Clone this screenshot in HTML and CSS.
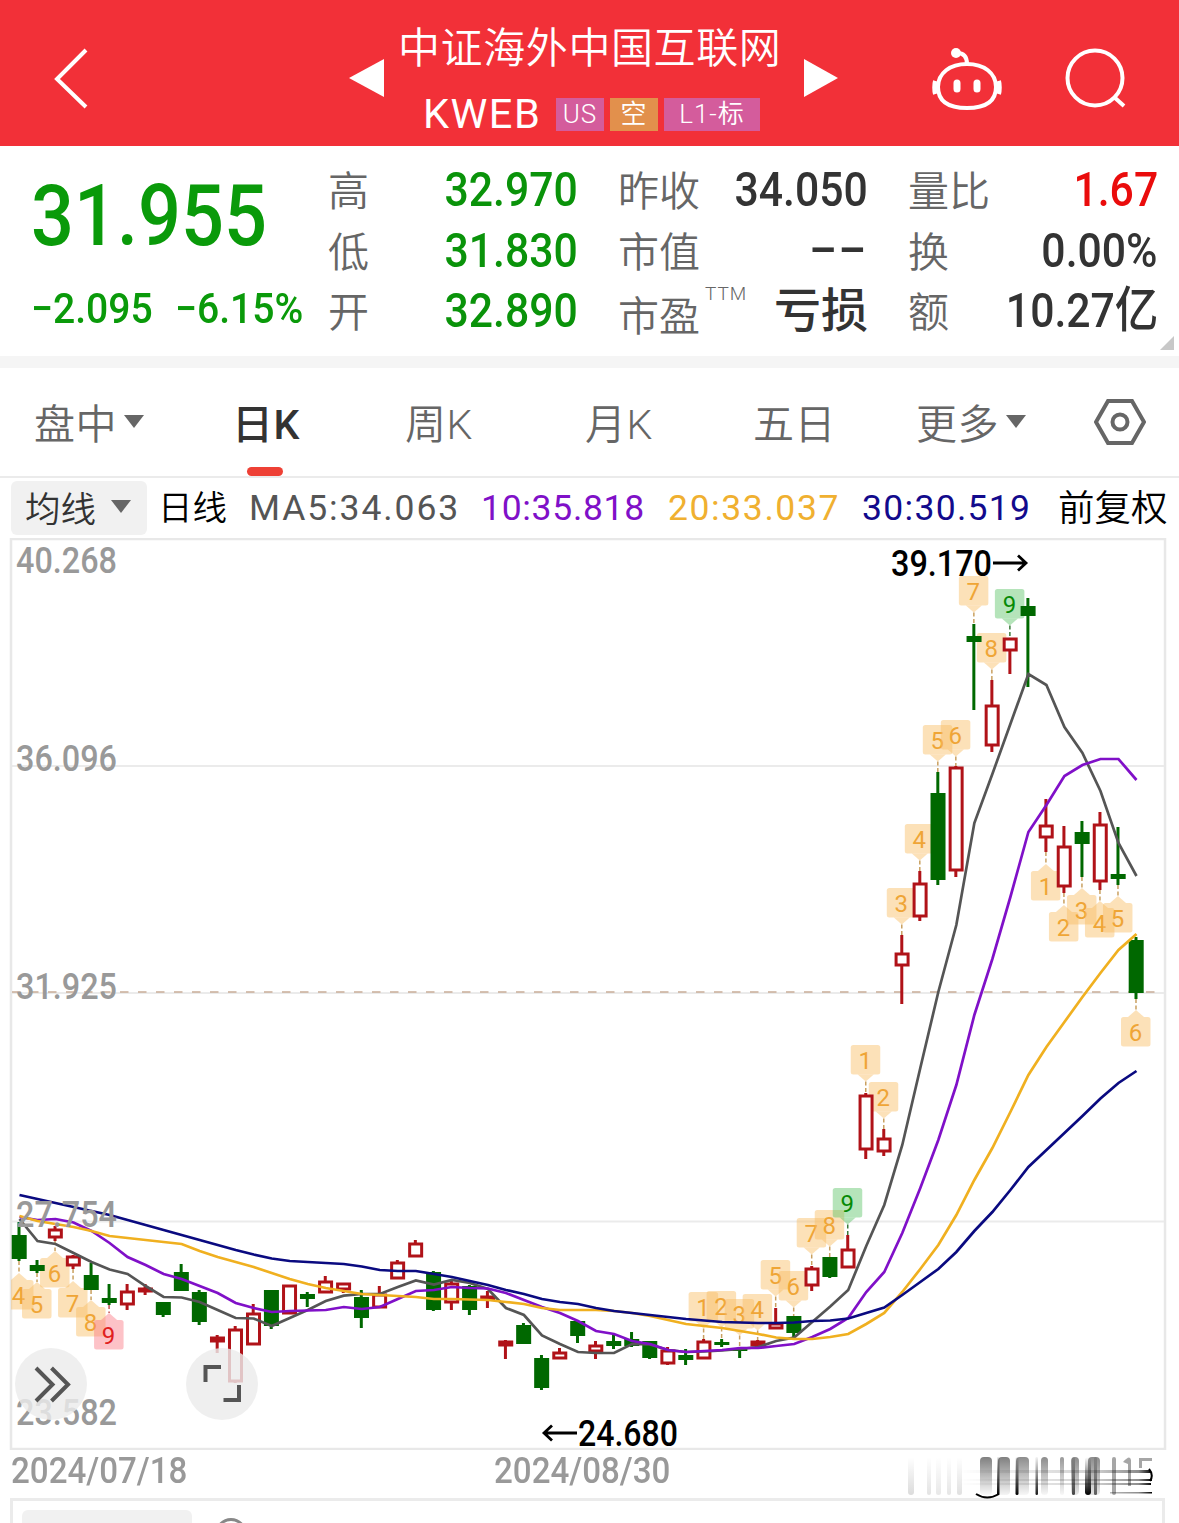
FILE: index.html
```
<!DOCTYPE html>
<html lang="zh-CN">
<head>
  <meta charset="UTF-8" />
  <meta name="viewport" content="width=device-width, initial-scale=1.0"/>
  <title>KWEB</title>
  <link rel="stylesheet" href="styles.css">
</head>
<body>

  <header class="header">
    <svg class="icon-back" width="40" height="66" viewBox="0 0 40 66"><path d="M34 5 L5 34 L34 62"/></svg>
    <svg class="arrow" width="35" height="38" viewBox="0 0 35 38"><path d="M0 19 L35 0 V38 Z"/></svg>
    <div class="title">
      <h1>中证海外中国互联网</h1>
      <div class="sub">
        <span class="code">KWEB</span>
        <span class="tag">US</span>
        <span class="tag tag-orange">空</span>
        <span class="tag tag-wide">L1-标</span>
      </div>
    </div>
    <svg class="arrow" width="35" height="38" viewBox="0 0 35 38"><path d="M34 19 L0 0 V38 Z"/></svg>
    <svg class="icon-robot" width="72" height="66" viewBox="0 0 72 66">
      <path d="M36 17 C53 17 65 26 65 40 C65 55 54 61 36 61 C18 61 7 55 7 40 C7 26 19 17 36 17 Z"/>
      <path class="ear" d="M4.500 34 C3.500 37 3.500 44 4.500 47 M67.500 34 C68.500 37 68.500 44 67.500 47"/>
      <path d="M26 6 C33 6 36 10 36 17"/>
      <circle class="dot" cx="25" cy="6" r="5"/>
      <path class="eye" d="M26 36 V42 M46 36 V42"/>
    </svg>
    <svg class="icon-search" width="66" height="66" viewBox="0 0 66 66"><circle cx="32" cy="32" r="27.500"/><path d="M51 51 L61 60"/></svg>
  </header>

  <section class="quote">
    <div class="price-box">
      <div class="price"><span>31.955</span></div>
      <div class="change"><span>−2.095</span><span>−6.15%</span></div>
    </div>
    <div class="stats">
      <div class="stat"><label>高</label><b class="green">32.970</b></div>
      <div class="stat"><label>低</label><b class="green">31.830</b></div>
      <div class="stat"><label>开</label><b class="green">32.890</b></div>
    </div>
    <div class="stats">
      <div class="stat"><label>昨收</label><b>34.050</b></div>
      <div class="stat"><label>市值</label><b class="dashes">––</b></div>
      <div class="stat"><label class="low">市盈<sup>TTM</sup></label><b class="cn">亏损</b></div>
    </div>
    <div class="stats">
      <div class="stat"><label>量比</label><b class="red">1.67</b></div>
      <div class="stat"><label>换</label><b>0.00%</b></div>
      <div class="stat"><label>额</label><b>10.27<i>亿</i></b></div>
    </div>
    <div class="corner"></div>
  </section>

  <nav class="tabs">
    <div class="tab tab-first">盘中<i class="caret"></i></div>
    <div class="tab active">日K</div>
    <div class="tab">周K</div>
    <div class="tab">月K</div>
    <div class="tab tab-five">五日</div>
    <div class="tab tab-more">更多<i class="caret"></i></div>
    <svg class="icon-set" width="52" height="48" viewBox="0 0 52 48"><path d="M14 3 H38 L50 24 L38 45 H14 L2 24 Z"/><circle cx="26" cy="24" r="7.500"/></svg>
  </nav>

  <div class="ma-row">
    <div class="ma-btn">均线<i class="caret"></i></div>
    <span class="period">日线</span>
    <span class="ma ma5">MA5:34.063</span>
    <span class="ma ma10">10:35.818</span>
    <span class="ma ma20">20:33.037</span>
    <span class="ma ma30">30:30.519</span>
    <span class="adjust">前复权</span>
  </div>

  <svg class="chart" id="chart" width="1179" height="912" viewBox="0 538 1179 912"></svg>

  <div class="dates">
    <span>2024/07/18</span>
    <span>2024/08/30</span>
    <svg id="smear" width="260" height="46" viewBox="900 1453 260 46"></svg>
  </div>

  <div class="panel">
    <div class="panel-btn"></div>
    <div class="panel-ring"></div>
  </div>

  <script src="chart.js"></script>
</body>
</html>
```

FILE: styles.css
```
* {
  box-sizing: border-box;
  margin: 0;
  padding: 0;
}

body {
  width: 1179px;
  height: 1523px;
  overflow: hidden;
  background-color: #fff;
  color: #333;
  font-family: Roboto, "Noto Sans CJK SC", sans-serif;
}

i {
  font-style: normal;
}

/* header */
.header {
  display: flex;
  height: 146px;
  padding-left: 52px;
  background-color: #f23038;
}

.header svg {
  flex: none;
  fill: none;
  stroke: #fff;
  stroke-width: 4;
}

.icon-back {
  margin-top: 45px;
  margin-right: 257px;
}

.header .arrow {
  margin-top: 59px;
  fill: #fff;
  stroke: none;
}

.title {
  width: 420px;
  padding-top: 19px;
  color: #fff;
}

.title h1 {
  height: 60px;
  line-height: 60px;
  padding-left: 14px;
  font-size: 42px;
  font-weight: 350;
  letter-spacing: 0.6px;
  white-space: nowrap;
}

.sub {
  display: flex;
  align-items: center;
  height: 36px;
  margin-top: 17px;
  padding-left: 39px;
  gap: 6px;
}

.code {
  width: 127px;
  padding-bottom: 2px;
  font-size: 41.5px;
  letter-spacing: 1.5px;
}

.tag {
  width: 48px;
  height: 33px;
  line-height: 32px;
  text-align: center;
  font-size: 26px;
  font-weight: 350;
  letter-spacing: 1px;
  background-color: #d45c9c;
}

.tag-orange {
  background-color: #e2904c;
}

.tag-wide {
  width: 96px;
}

.icon-robot {
  margin-top: 47px;
  margin-left: 92px;
}

.header .icon-robot .dot {
  fill: #fff;
  stroke: none;
}

.header .icon-robot .eye {
  stroke-width: 7;
  stroke-linecap: round;
}

.header .icon-robot .ear {
  stroke-width: 5;
}

.icon-search {
  margin-top: 46px;
  margin-left: 60px;
}

/* quote */
.quote {
  position: relative;
  display: flex;
  gap: 40px;
  height: 222px;
  padding-top: 14px;
  border-bottom: 12px solid #f5f5f5;
}

.price-box {
  width: 288px;
  padding-left: 31px;
  color: #0a9a0a;
  font-weight: 500;
}

.price {
  height: 113px;
  line-height: 112px;
  font-size: 86px;
}

.price span,
.change span {
  display: inline-block;
  transform: scaleX(0.88);
  transform-origin: left;
}

.change {
  display: flex;
  height: 72px;
  line-height: 72px;
  font-size: 42.5px;
  white-space: nowrap;
}

.change span {
  flex: none;
  width: 144px;
  transform: scaleX(0.92);
}

.stats {
  width: 250px;
}

.stat {
  display: flex;
  justify-content: space-between;
  height: 60.5px;
  line-height: 59px;
}

.stat label {
  padding-top: 3px;
  color: #666;
  font-size: 41px;
  font-weight: 350;
  white-space: nowrap;
}

.stat .low {
  padding-top: 7px;
}

.stat sup {
  position: relative;
  top: -31px;
  left: 5px;
  font-size: 19px;
  letter-spacing: 1px;
  line-height: 0;
  vertical-align: baseline;
}

.stat b {
  font-size: 48px;
  font-weight: 500;
  white-space: nowrap;
  transform: scaleX(0.89);
  transform-origin: right;
}

.stat .cn {
  font-size: 47px;
  transform: none;
}

.stat b i {
  font-size: 49px;
}

.stat .dashes {
  letter-spacing: 2px;
}

.green {
  color: #0a930a;
}

.red {
  color: #ea0c0c;
}

.corner {
  position: absolute;
  right: 5px;
  bottom: 6px;
  border-left: 14px solid transparent;
  border-bottom: 14px solid #c8c8c8;
}

/* tabs */
.tabs {
  display: flex;
  align-items: center;
  height: 110px;
  padding-left: 34px;
  border-bottom: 2px solid #ebebeb;
  color: #666;
  font-size: 41px;
  font-weight: 350;
}

.tab {
  display: flex;
  align-items: center;
  position: relative;
  width: 180px;
  height: 108px;
  padding-bottom: 2px;
  letter-spacing: 0.5px;
}

.tab-first {
  width: 198px;
}

.tab-five {
  width: 163px;
  margin-left: -12px;
}

.tab-more {
  width: 178px;
}

.active {
  width: 173px;
  color: #333;
  font-weight: 500;
}

.active::after {
  content: "";
  position: absolute;
  left: 15px;
  bottom: 0;
  width: 36px;
  height: 9px;
  border-radius: 5px;
  background-color: #ee4035;
}

.caret {
  margin-left: 7px;
  border: 10px solid transparent;
  border-top: 13px solid #666;
  border-bottom: 0;
}

.icon-set {
  fill: none;
  stroke: #666;
  stroke-width: 4;
}

/* moving averages */
.ma-row {
  display: flex;
  align-items: center;
  height: 60px;
  padding-left: 11px;
  font-size: 35.5px;
  white-space: nowrap;
}

.ma-btn {
  display: flex;
  align-items: center;
  width: 136px;
  height: 54px;
  padding-left: 14px;
  padding-bottom: 4px;
  border-radius: 6px;
  background-color: #f1f1f1;
  font-size: 35.5px;
  font-weight: 350;
}

.ma-btn .caret {
  margin-left: 15px;
}

.period {
  width: 102px;
  padding-left: 11px;
  padding-bottom: 6px;
  color: #000;
  font-size: 34.5px;
  font-weight: 350;
}

.ma {
  letter-spacing: 1.7px;
}

.ma5 { width: 232px; color: #555; letter-spacing: 1.9px; }
.ma10 { width: 187px; color: #8010c8; letter-spacing: 0.7px; }
.ma20 { width: 194px; color: #f0b030; letter-spacing: 1.6px; }
.ma30 { width: 196px; color: #120a8c; letter-spacing: 1.3px; }

.adjust {
  padding-bottom: 6px;
  color: #000;
  font-size: 36.5px;
  font-weight: 350;
}

/* chart */
.chart {
  display: block;
}

.axis-label {
  font-size: 36px;
  font-weight: 500;
  fill: #999;
}

.price-label {
  font-size: 36px;
  font-weight: 500;
  fill: #000;
}

.mark-label {
  font-size: 24px;
  text-anchor: middle;
}

.dates {
  display: flex;
  height: 48px;
  padding-left: 11px;
  line-height: 43px;
  font-size: 36px;
  font-weight: 500;
  color: #999;
}

.dates span {
  width: 483px;
  transform: scaleX(0.92);
  transform-origin: left;
}

.dates span + span {
  width: 406px;
}

.dates svg {
  flex: none;
  margin-top: 3px;
}

.panel {
  display: flex;
  width: 1155px;
  height: 60px;
  margin-left: 10px;
  padding: 9px;
  border: 3px solid #ebebeb;
}

.panel-btn {
  width: 170px;
  height: 60px;
  border-radius: 6px;
  background-color: #f1f1f1;
}

.panel-ring {
  width: 32px;
  height: 32px;
  margin-top: 8px;
  margin-left: 23px;
  border: 3px solid #888;
  border-radius: 50%;
}
```

FILE: chart.js
```
const STEP = 18.016;
const GREEN = "#006800";
const RED = "#b01218";
const cx = i => 19 + i * STEP;

// color, high, body top, body bottom, low
const candles = [
  ["g",1222,1235,1259,1261],["g",1260,1265,1271,1273],["r",1226,1230,1237,1241],["r",1255,1257,1265,1269],
  ["g",1263,1275,1290,1290],["g",1284,1298,1303,1305],["r",1284,1292,1304,1310],["r",1284,1289,1291,1295],
  ["g",1302,1302,1315,1317],["g",1264,1272,1291,1291],["g",1290,1292,1322,1325],["r",1335,1338,1341,1353],
  ["r",1326,1330,1381,1383],["r",1304,1314,1344,1345],["g",1290,1290,1326,1329],["r",1285,1286,1313,1314],
  ["g",1292,1294,1299,1307],["r",1276,1282,1292,1293],["r",1284,1284,1289,1293],["g",1290,1297,1318,1328],
  ["r",1286,1295,1307,1308],["r",1260,1263,1278,1278],["r",1240,1244,1256,1256],["g",1271,1272,1310,1311],
  ["r",1281,1284,1302,1310],["g",1285,1286,1310,1315],["r",1291,1297,1299,1308],["r",1340,1342,1345,1359],
  ["g",1323,1325,1344,1344],["g",1355,1358,1388,1390],["r",1348,1353,1358,1358],["g",1320,1321,1336,1343],
  ["r",1341,1346,1351,1359],["g",1334,1341,1346,1349],["g",1332,1339,1346,1347],["g",1341,1341,1358,1359],
  ["r",1347,1351,1363,1365],["g",1349,1355,1360,1365],["r",1339,1342,1358,1359],["g",1339,1342,1345,1347],
  ["g",1347,1348,1351,1358],["r",1340,1342,1345,1346],["r",1308,1324,1328,1328],["g",1316,1316,1333,1337],
  ["r",1266,1269,1285,1291],["g",1257,1257,1277,1278],["r",1235,1250,1267,1268],["r",1093,1096,1149,1159],
  ["r",1129,1139,1151,1156],["r",935,954,965,1004],["r",871,884,916,921],["g",772,793,880,885],
  ["r",766,768,870,877],["g",624,636,642,710],["r",680,706,745,752],["r",638,639,650,674],
  ["g",598,606,616,687],["r",799,826,837,852],["r",826,847,886,893],["g",821,832,844,877],
  ["r",812,825,881,890],["g",827,874,879,885],["g",937,940,993,999]
];

const lines = {
  "#555555": [1219,1241,1244,1253,1262,1269.5,1274,1286,1297,1297.5,1302,1310,1318,1318.5,1326,1318,1310,1301,1295.7,1294,1294,1287,1280.5,1284.5,1280,1283,1289,1308,1315,1335.5,1344,1352,1353,1353,1344,1344.5,1350,1352,1351.5,1350.5,1349,1347,1341,1337.5,1322,1306.5,1290,1246,1205,1145,1068,992,925,823,774,724,674,685,727,753,791,843,876],
  "#8010c8": [1217,1220,1219,1222.5,1231,1243,1257,1265,1274,1279,1286,1293,1303,1308,1312,1311,1310.5,1310,1307,1309,1307,1299,1291,1290,1287,1288,1288.5,1293,1300,1307,1313,1321,1331,1334,1341,1344,1350,1352,1351,1350,1348,1348,1346,1344,1337,1329,1318,1292,1272,1233,1188,1140,1085,1015,959,897,832,805,776,765,759,759,780],
  "#f0b020": [1216,1221,1224,1227,1231,1236,1238,1240,1242,1244,1251,1257,1262,1267,1273,1279,1284,1288,1291,1294,1295,1296,1297,1299,1299,1299.5,1300,1302,1304,1308,1310,1310,1310,1311,1313,1316,1320,1324,1326,1328,1331,1334,1337.5,1339,1339,1337,1334,1324,1313,1292,1269,1245,1215,1180,1148,1112,1075,1047,1022,997,973,950,934],
  "#0a0a80": [1195,1199,1203,1207,1211,1215,1220,1225,1230,1235,1240,1245,1250,1254.5,1258.5,1261,1262,1263,1264,1266.5,1270,1271,1271,1274,1277,1281,1285,1290,1294,1299,1302,1304,1308,1311,1313,1315,1317,1319,1320.5,1322,1322.5,1323,1323,1322.5,1321,1320.5,1318.5,1313,1307.5,1295,1282,1269,1252,1231,1212,1190,1167,1150,1133,1116,1098.5,1083,1071]
};

// index, box top, digit, side of the candle, kind
const marks = [
  [0,1280,4,"below"],[1,1289,5,"below"],[2,1258,6,"below"],[3,1288,7,"below"],[4,1307,8,"below"],[5,1320,9,"below","pink"],
  [38,1292,1,"above"],[39,1291,2,"above"],[40,1299,3,"above"],[41,1294,4,"above"],[42,1260,5,"above"],[43,1271,6,"above"],
  [44,1218,7,"above"],[45,1210,8,"above"],[46,1188,9,"above","green"],[47,1045,1,"above"],[48,1082,2,"above"],
  [49,888,3,"above"],[50,824,4,"above"],[51,725,5,"above"],[52,720,6,"above"],[53,576,7,"above"],[54,633,8,"above"],[55,589,9,"above","green"],
  [57,871,1,"below"],[58,912,2,"below"],[59,895,3,"below"],[60,908,4,"below"],[61,903,5,"below"],[62,1017,6,"below"]
];
const kinds = {
  orange: ["#f9bc62", "#efa536", "#c9a060"],
  green: ["#5cc465", "#068a06", "#3a7a3a"],
  pink: ["#fa7883", "#e02020", "#c05050"]
};

let svg = "";

[766, 993, 1221.5].forEach(y => {
  svg += `<path d="M12 ${y}H1164" stroke="#ebebeb" stroke-width="2"/>`;
});
svg += `<rect x="11" y="539" width="1154" height="910" fill="none" stroke="#e8e8e8" stroke-width="2.5"/>`;
svg += `<path d="M12 992H1164" stroke="#c9ad98" stroke-width="1.6" stroke-dasharray="8.5 9.5"/>`;
svg += `<clipPath id="plot"><rect x="11" y="539" width="1154" height="910"/></clipPath>`;

svg += `<g clip-path="url(#plot)">`;
marks.forEach(([i, top, digit, side, kind]) => {
  const [fill, color, dash] = kinds[kind || "orange"];
  const x = cx(i);
  const bottom = top + 29.5;
  const above = side === "above";
  const tip = above ? `M${x - 8} ${bottom}L${x} ${bottom + 7}L${x + 8} ${bottom}Z` : `M${x - 8} ${top}L${x} ${top - 7}L${x + 8} ${top}Z`;
  const from = above ? bottom + 7 : candles[i][4];
  const to = above ? candles[i][1] : top - 7;
  svg += `<g fill="${fill}" fill-opacity="0.45"><rect x="${x - 15}" y="${top}" width="29.5" height="29.5" rx="2.5"/><path d="${tip}"/></g>`;
  if (to > from) svg += `<path d="M${x} ${from}V${to}" stroke="${dash}" stroke-width="1.5" stroke-dasharray="4 2.5"/>`;
  svg += `<text class="mark-label" x="${x - 0.5}" y="${top + 24}" fill="${color}">${digit}</text>`;
});

candles.forEach(([color, high, top, bottom, low], i) => {
  const x = cx(i);
  if (color === "g") {
    svg += `<path d="M${x} ${high}V${low}" stroke="${GREEN}" stroke-width="3"/>`;
    svg += `<rect x="${x - 7.3}" y="${top}" width="15" height="${bottom - top}" fill="${GREEN}"/>`;
  } else {
    svg += `<path d="M${x} ${high}V${top}M${x} ${bottom}V${low}" stroke="${RED}" stroke-width="3"/>`;
    svg += `<rect x="${x - 5.7}" y="${top}" width="12" height="${bottom - top}" fill="${bottom - top > 3 ? "#fff" : RED}" stroke="${RED}" stroke-width="3"/>`;
  }
});

for (const color in lines) {
  const points = lines[color].map((y, i) => `${cx(i) + 0.5},${y}`).join(" ");
  svg += `<polyline points="${points}" fill="none" stroke="${color}" stroke-width="2.7"/>`;
}
svg += `</g>`;

[["40.268", 573], ["36.096", 771], ["31.925", 999], ["27.754", 1227], ["23.582", 1425]].forEach(([t, y]) => {
  svg += `<text class="axis-label" x="16" y="${y}" textLength="101" lengthAdjust="spacingAndGlyphs">${t}</text>`;
});
svg += `<text class="price-label" x="891" y="576" textLength="101" lengthAdjust="spacingAndGlyphs">39.170</text>`;
svg += `<text class="price-label" x="578" y="1446" textLength="100" lengthAdjust="spacingAndGlyphs">24.680</text>`;
svg += `<path d="M993 563H1026M1018 555.5L1026 563L1018 570.5M577 1433H544M552 1425.5L544 1433L552 1440.5" fill="none" stroke="#000" stroke-width="2.8"/>`;

svg += `<g fill="#ebebeb" fill-opacity="0.82"><circle cx="51" cy="1384" r="36"/><circle cx="222" cy="1384" r="36"/></g>`;
svg += `<path d="M36 1368L52.5 1384.5L36 1401M51.5 1368L68 1384.5L51.5 1401M205.5 1382V1367H221M239 1385V1400H223.5" fill="none" stroke="#555" stroke-width="4"/>`;

document.getElementById("chart").innerHTML = svg;

// last date label: faded streaks; x, width, top opacity, bottom opacity
const streaks = [
  [908,6,0,.14],[927,4,0,.11],[936,5,0,.09],[947,4,0,.1],[957,5,0,.12],[980,12,.5,.02],[998,12,.5,.04],[997,2.5,.1,1],
  [1016,13,.45,.03],[1015.5,3,.05,1],[1035.5,2.5,.05,.9],[1041,7,.45,.03],[1060,4,.4,.03],[1071,8,.45,.1],[1072,3,.1,.7],
  [1088,12,.45,.1],[1085,6,0,1],[1094,3,.1,.6],[1112,4,.35,.35]
];
let smear = "";
streaks.forEach(([x, w, a, b], i) => {
  smear += `<linearGradient id="s${i}" x1="0" y1="0" x2="0" y2="1"><stop offset="0" stop-opacity="${a}"/><stop offset="1" stop-opacity="${b}"/></linearGradient>`;
  smear += `<rect x="${x}" y="1457" width="${w}" height="38" rx="${Math.min(w / 2, 4)}" fill="url(#s${i})"/>`;
});
smear += `<path d="M1123 1462Q1130 1454 1131 1460V1486H1128V1464ZM1139 1458H1152V1461H1142V1468H1139Z" fill="#000" fill-opacity="0.35"/>`;
smear += `<linearGradient id="h" gradientUnits="userSpaceOnUse" x1="960" y1="0" x2="1152" y2="0"><stop offset="0" stop-opacity="0"/><stop offset="0.7" stop-opacity="0.18"/><stop offset="0.93" stop-opacity="0.45"/><stop offset="1" stop-opacity="1"/></linearGradient>`;
smear += `<filter id="soft"><feGaussianBlur stdDeviation="0 0.6"/></filter>`;
smear += `<g fill="url(#h)" filter="url(#soft)"><rect x="908" y="1470" width="243" height="3"/><rect x="960" y="1479" width="192" height="2"/><rect x="908" y="1483" width="243" height="2"/><rect x="1110" y="1492" width="42" height="1.5"/></g>`;
smear += `<path d="M976 1494Q987 1501 999 1494M1149 1469Q1154 1475 1150 1481" fill="none" stroke="#000" stroke-width="2"/>`;
document.getElementById("smear").innerHTML = smear;
```
